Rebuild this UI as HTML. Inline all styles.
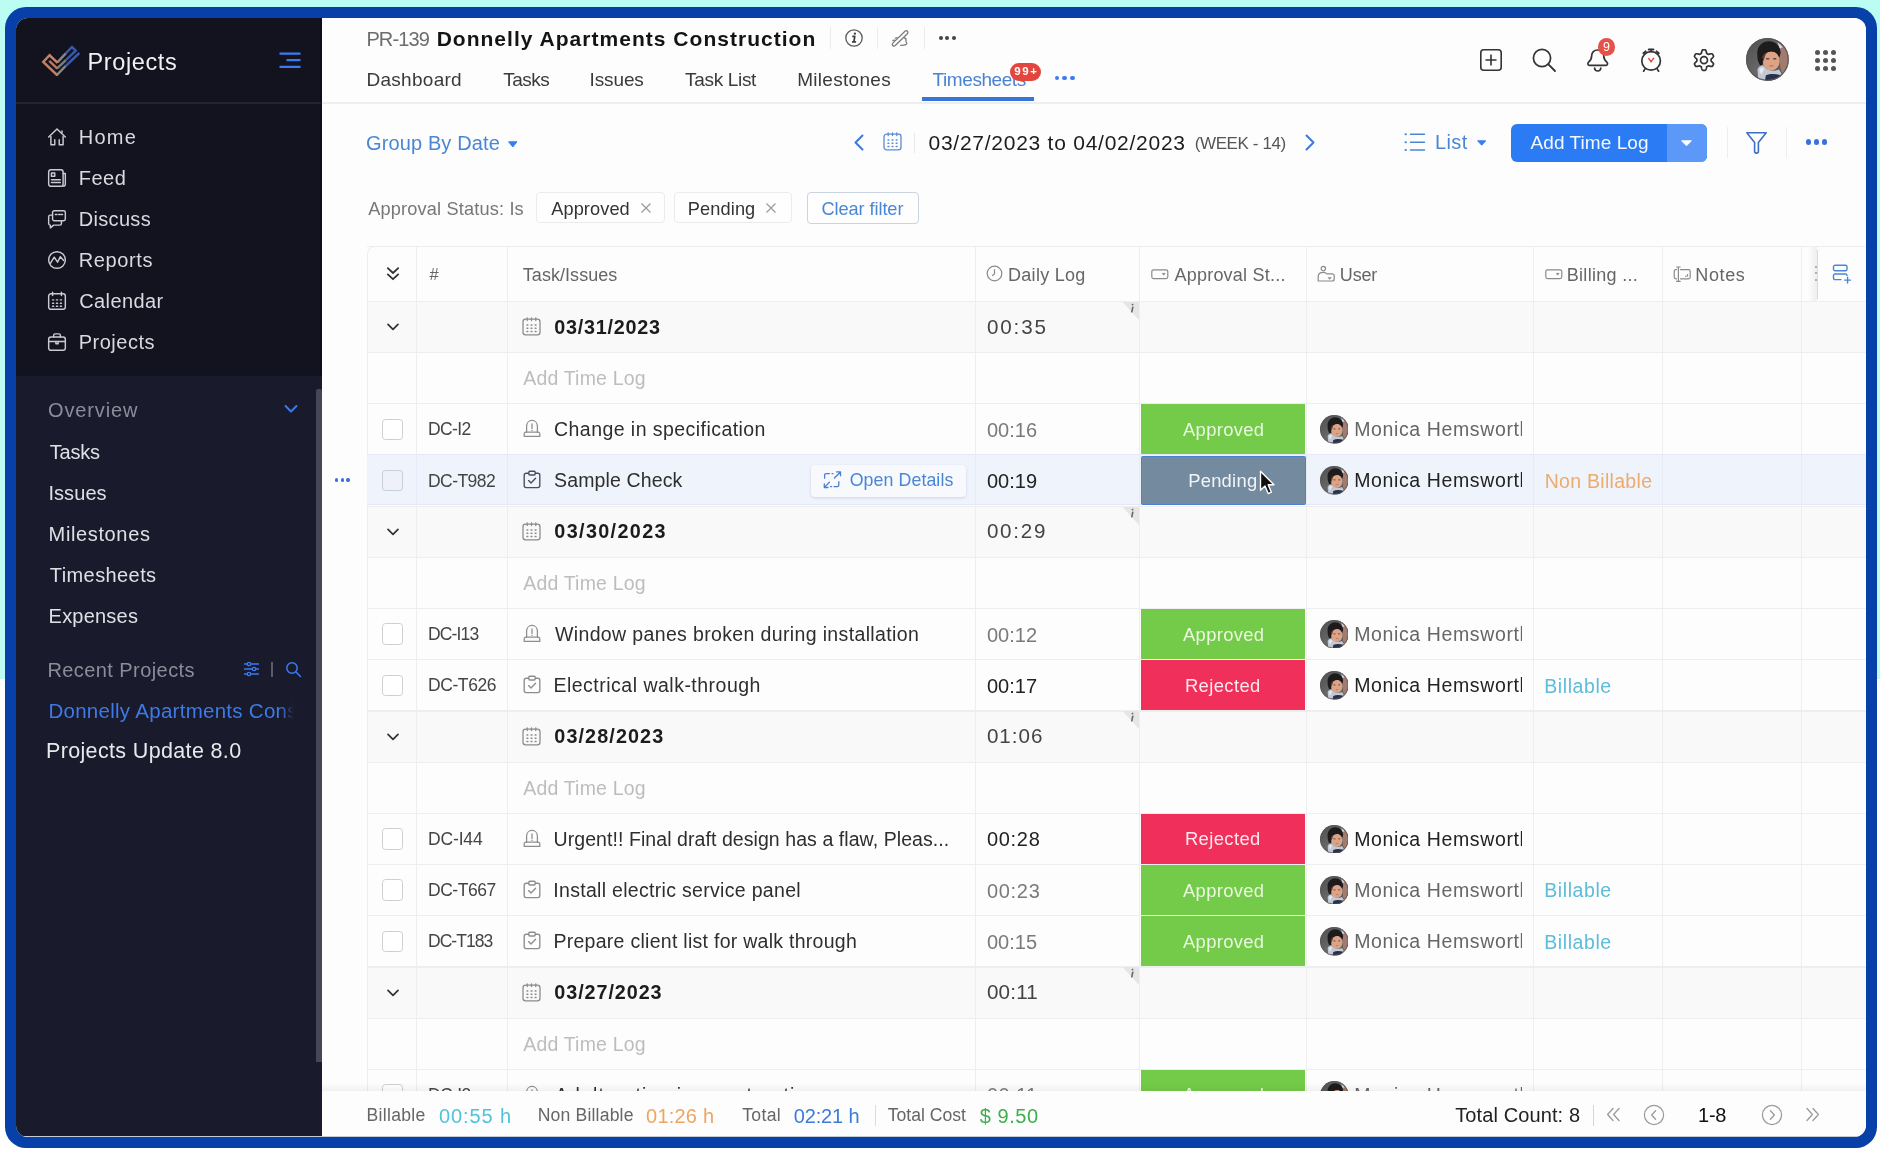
<!DOCTYPE html>
<html><head><meta charset="utf-8"><title>Timesheet</title>
<style>
*{box-sizing:border-box;margin:0;padding:0}
html,body{width:1880px;height:1154px;overflow:hidden;background:#fff;font-family:"Liberation Sans",sans-serif}
.abs{position:absolute}
#bgtop{position:absolute;left:0;top:0;width:1880px;height:679px;background:#bcfdf3}
#frame{position:absolute;left:5px;top:7px;width:1872px;height:1141px;background:#0640a8;border-radius:21px}
#app{position:absolute;left:16px;top:18px;width:1850px;height:1119px;border-radius:12px;overflow:hidden;background:#fdfdfd}
#page{position:absolute;left:-16px;top:-18px;width:1880px;height:1154px;will-change:transform}
.t{position:absolute;white-space:nowrap;line-height:1}
</style></head>
<body>
<div id="bgtop"></div>
<div id="frame"></div>
<div id="app"><div id="page">
<div class="abs" style="left:16px;top:18px;width:306px;height:1119px;background:#12131f"></div>
<div class="abs" style="left:16px;top:375.5px;width:306px;height:762px;background:#191a2b"></div>
<div class="abs" style="left:16px;top:102px;width:306px;height:1.5px;background:#222432"></div>
<div class="abs" style="left:320px;top:18px;width:2px;height:357px;background:rgba(4,5,16,.35)"></div>
<svg class="abs" style="left:36px;top:38px;" width="60" height="46" viewBox="0 0 60 46" fill="none">
<g transform="translate(25.4 23.4) scale(0.935) translate(-25.4 -23.4)" stroke-width="2.65" stroke-linecap="butt" stroke-linejoin="miter" fill="none">
<path d="M29.6 15.4 L36.7 8 L40.7 12 L29.6 22.6" stroke="#3957a3"/>
<path d="M29.3 28.9 L44.6 14.4" stroke="#3b5aa8"/>
<path d="M21.1 24.4 L29.9 15.1" stroke="#878787"/>
<path d="M20.7 31 L29.9 22.3" stroke="#7a7a7a"/>
<path d="M20.2 38.4 L29.6 28.6" stroke="#878787"/>
<path d="M13.6 15.9 L6 23.9 L21 38.2" stroke="#c67e60"/>
<path d="M12.6 16.6 L21.4 25" stroke="#cd8667"/>
<path d="M12.4 22.9 L21 31.2" stroke="#be7558"/>
</g></svg>
<div class="t" style="left:87.52px;top:50.92px;font-size:23.5px;color:#f2f2f4;font-weight:400;letter-spacing:0.61px;">Projects</div>
<svg class="abs" style="left:278px;top:51px;" width="24" height="18" viewBox="0 0 24 18" fill="none"><g stroke="#3b7bf2" stroke-width="2.2"><path d="M1.5 2.7H22.5M8.5 9.2H22.5M1.5 15.8H22.5"/></g></svg>
<div class="t" style="left:78.70px;top:127.20px;font-size:20px;color:#d9dae0;font-weight:400;letter-spacing:1.3px;">Home</div>
<div class="t" style="left:78.70px;top:168.20px;font-size:20px;color:#d9dae0;font-weight:400;letter-spacing:0.533px;">Feed</div>
<div class="t" style="left:78.70px;top:209.20px;font-size:20px;color:#d9dae0;font-weight:400;letter-spacing:0.333px;">Discuss</div>
<div class="t" style="left:78.70px;top:250.20px;font-size:20px;color:#d9dae0;font-weight:400;letter-spacing:0.617px;">Reports</div>
<div class="t" style="left:79.30px;top:291.20px;font-size:20px;color:#d9dae0;font-weight:400;letter-spacing:0.371px;">Calendar</div>
<div class="t" style="left:78.70px;top:332.20px;font-size:20px;color:#d9dae0;font-weight:400;letter-spacing:0.514px;">Projects</div>
<svg class="abs" style="left:46.9px;top:127.4px;" width="20" height="20" viewBox="0 0 18 18" fill="none"><g stroke="#c9cad2" stroke-width="1.3" stroke-linecap="round" stroke-linejoin="round"><path d="M1.5 9 L9 1.8 L16.5 9"/><path d="M3.5 8.5V16H7V11.5"/><path d="M11 11.5V16H14.5V8.5"/><path d="M13.5 3.5V5"/></g></svg>
<svg class="abs" style="left:46.9px;top:168.4px;" width="20" height="20" viewBox="0 0 18 18" fill="none"><g stroke="#c9cad2" stroke-width="1.3" stroke-linecap="round" stroke-linejoin="round"><rect x="1.5" y="1.5" width="13" height="15" rx="2"/><path d="M14.5 5H16.5V14.5A2 2 0 0 1 14.5 16.5"/><rect x="4" y="4.5" width="3" height="3"/><path d="M4 10.5H12M4 13H12"/></g></svg>
<svg class="abs" style="left:46.9px;top:209.4px;" width="20" height="20" viewBox="0 0 18 18" fill="none"><g stroke="#c9cad2" stroke-width="1.3" stroke-linecap="round" stroke-linejoin="round"><rect x="5" y="1.5" width="11.5" height="9" rx="1.5"/><path d="M7.5 5H9M10.5 5H12M13 5H14"/><path d="M5 5.5H3A1.5 1.5 0 0 0 1.5 7V13A1.5 1.5 0 0 0 3 14.5V17L6 14.5H11.5A1.5 1.5 0 0 0 13 13V10.5"/></g></svg>
<svg class="abs" style="left:46.9px;top:250.4px;" width="20" height="20" viewBox="0 0 18 18" fill="none"><g stroke="#c9cad2" stroke-width="1.3" stroke-linecap="round" stroke-linejoin="round"><circle cx="9" cy="9" r="7.5"/><path d="M3 12 L6.5 6.5 L9.5 11 L12 6 L15 9.5" /></g></svg>
<svg class="abs" style="left:46.9px;top:291.4px;" width="20" height="20" viewBox="0 0 18 18" fill="none"><g stroke="#c9cad2" stroke-width="1.3" stroke-linecap="round" stroke-linejoin="round"><rect x="1.5" y="2.5" width="15" height="14" rx="2"/><path d="M5 1V4M13 1V4"/><path d="M5 8H6M8.5 8H9.5M12 8H13M5 11H6M8.5 11H9.5M12 11H13M5 13.8H6M8.5 13.8H9.5M12 13.8H13" /></g></svg>
<svg class="abs" style="left:46.9px;top:332.4px;" width="20" height="20" viewBox="0 0 18 18" fill="none"><g stroke="#c9cad2" stroke-width="1.3" stroke-linecap="round" stroke-linejoin="round"><rect x="1.5" y="4.5" width="15" height="12" rx="2"/><path d="M6 4.5V3A1.3 1.3 0 0 1 7.3 1.7H10.7A1.3 1.3 0 0 1 12 3V4.5"/><path d="M1.5 8.5H16.5"/><path d="M8 8.5V10.5H10V8.5"/></g></svg>
<div class="t" style="left:48.10px;top:399.90px;font-size:20px;color:#8b8d99;font-weight:400;letter-spacing:0.857px;">Overview</div>
<svg class="abs" style="left:283px;top:403px;" width="16" height="12" viewBox="0 0 16 12" fill="none"><path d="M2.5 3 L8 8.5 L13.5 3" stroke="#3b7bf2" stroke-width="2" stroke-linecap="round" stroke-linejoin="round"/></svg>
<div class="t" style="left:49.80px;top:441.80px;font-size:20px;color:#dfe0e5;font-weight:400;letter-spacing:-0.2px;">Tasks</div>
<div class="t" style="left:48.40px;top:482.80px;font-size:20px;color:#dfe0e5;font-weight:400;letter-spacing:0.08px;">Issues</div>
<div class="t" style="left:48.60px;top:523.80px;font-size:20px;color:#dfe0e5;font-weight:400;letter-spacing:0.633px;">Milestones</div>
<div class="t" style="left:49.80px;top:564.80px;font-size:20px;color:#dfe0e5;font-weight:400;letter-spacing:0.411px;">Timesheets</div>
<div class="t" style="left:48.60px;top:605.80px;font-size:20px;color:#dfe0e5;font-weight:400;letter-spacing:0.214px;">Expenses</div>
<div class="t" style="left:47.40px;top:659.80px;font-size:20px;color:#8b8d99;font-weight:400;letter-spacing:0.429px;">Recent Projects</div>
<svg class="abs" style="left:243px;top:661px;" width="17" height="16" viewBox="0 0 17 16" fill="none"><g stroke="#3b7bf2" stroke-width="1.3" stroke-linecap="round"><path d="M1.5 3H15.5M1.5 8H15.5M1.5 13H15.5"/><circle cx="6" cy="3" r="1.7" fill="#1a1b2b"/><circle cx="11" cy="8" r="1.7" fill="#1a1b2b"/><circle cx="6" cy="13" r="1.7" fill="#1a1b2b"/></g></svg>
<div class="abs" style="left:271px;top:662px;width:1.5px;height:15px;background:#5a5c6b"></div>
<svg class="abs" style="left:285px;top:661px;" width="17" height="17" viewBox="0 0 17 17" fill="none"><g stroke="#3b7bf2" stroke-width="1.5" stroke-linecap="round"><circle cx="7" cy="7" r="5.2"/><path d="M11 11L15.5 15.5"/></g></svg>
<div class="abs" style="left:48px;top:695px;width:246px;height:32px;overflow:hidden">
<div class="t" style="left:0.40px;top:6.36px;font-size:20.5px;color:#3e7ae6;font-weight:400;letter-spacing:0.28px;">Donnelly Apartments Construction</div>
</div>
<div class="abs" style="left:280px;top:695px;width:14px;height:32px;background:linear-gradient(90deg,rgba(26,27,43,0),#1a1b2b)"></div>
<div class="t" style="left:45.98px;top:741.28px;font-size:21.5px;color:#e9e9ec;font-weight:400;letter-spacing:0.35px;">Projects Update 8.0</div>
<div class="abs" style="left:315.6px;top:389px;width:6.2px;height:673.2px;background:#454656;border-radius:2px 2px 0 0"></div>
<div class="abs" style="left:322px;top:18px;width:1544px;height:1119px;background:#fdfdfd"></div>
<div class="t" style="left:366.40px;top:29.00px;font-size:20px;color:#6d6d6d;font-weight:400;letter-spacing:-0.86px;">PR-139</div>
<div class="t" style="left:436.63px;top:28.22px;font-size:21px;color:#141414;font-weight:700;letter-spacing:1.023px;">Donnelly Apartments Construction</div>
<div class="abs" style="left:829.6px;top:27px;width:1.2px;height:21.5px;background:#ececec"></div>
<div class="abs" style="left:876.8px;top:27px;width:1.2px;height:21.5px;background:#ececec"></div>
<div class="abs" style="left:924px;top:27px;width:1.2px;height:21.5px;background:#ececec"></div>
<svg class="abs" style="left:843.6px;top:28.2px;" width="20" height="20" viewBox="0 0 20 20" fill="none"><circle cx="10" cy="10" r="8.2" stroke="#5a5a5a" stroke-width="1.3"/><path d="M9 8.4H10.8L9.9 13.6M8.7 13.9H11.4" stroke="#3c3c3c" stroke-width="1.7" stroke-linecap="round" stroke-linejoin="round"/><circle cx="10.9" cy="5.7" r="1.15" fill="#3c3c3c"/></svg>
<svg class="abs" style="left:890px;top:28px;" width="21" height="21" viewBox="0 0 21 21" fill="none"><g stroke="#7c7c7c" stroke-width="1.3" stroke-linecap="round" stroke-linejoin="round"><rect x="-10.2" y="-1.7" width="20.4" height="3.4" rx="1.7" transform="translate(10.1 10.4) rotate(-44.2)"/><path d="M14.4 10 C17.6 10.4 15 13 16.4 14.6 C17.8 16.2 15 17.6 10.6 17.4"/><path d="M3 12.5L4.8 12.1M5.4 10.1L7 9.6"/></g></svg>
<div class="abs" style="left:938.9px;top:36.2px;width:4px;height:4px;background:#444;border-radius:50%"></div>
<div class="abs" style="left:945.3px;top:36.2px;width:4px;height:4px;background:#444;border-radius:50%"></div>
<div class="abs" style="left:951.6999999999999px;top:36.2px;width:4px;height:4px;background:#444;border-radius:50%"></div>
<div class="t" style="left:366.48px;top:70.18px;font-size:19px;color:#3a3a3a;font-weight:400;letter-spacing:0.281px;">Dashboard</div>
<div class="t" style="left:503.32px;top:70.18px;font-size:19px;color:#3a3a3a;font-weight:400;letter-spacing:-0.55px;">Tasks</div>
<div class="t" style="left:589.49px;top:70.18px;font-size:19px;color:#3a3a3a;font-weight:400;letter-spacing:-0.107px;">Issues</div>
<div class="t" style="left:685.12px;top:70.18px;font-size:19px;color:#3a3a3a;font-weight:400;letter-spacing:-0.329px;">Task List</div>
<div class="t" style="left:797.18px;top:70.18px;font-size:19px;color:#3a3a3a;font-weight:400;letter-spacing:0.296px;">Milestones</div>
<div class="t" style="left:932.62px;top:70.18px;font-size:19px;color:#4a82d3;font-weight:400;letter-spacing:-0.436px;">Timesheets</div>
<div class="abs" style="left:1010px;top:63px;width:31px;height:17.5px;background:#e2463f;border-radius:9px"></div>
<div class="t" style="left:1014.15px;top:66.28px;font-size:11.5px;color:#fff;font-weight:700;letter-spacing:1.656px;">99+</div>
<div class="abs" style="left:1054.5px;top:75.8px;width:4.4px;height:4.4px;background:#3b7cf0;border-radius:50%"></div>
<div class="abs" style="left:1062.4px;top:75.8px;width:4.4px;height:4.4px;background:#3b7cf0;border-radius:50%"></div>
<div class="abs" style="left:1070.3px;top:75.8px;width:4.4px;height:4.4px;background:#3b7cf0;border-radius:50%"></div>
<div class="abs" style="left:921.5px;top:97px;width:112px;height:3.5px;background:#3a75d6"></div>
<div class="abs" style="left:322px;top:102px;width:1544px;height:1.5px;background:#eeeeee"></div>
<svg class="abs" style="left:1479px;top:48px;" width="24" height="24" viewBox="0 0 24 24" fill="none"><rect x="1.8" y="1.8" width="20.4" height="20.4" rx="3" stroke="#333" stroke-width="1.6"/><path d="M12 6.5V17.5M6.5 12H17.5" stroke="#333" stroke-width="1.6"/></svg>
<svg class="abs" style="left:1531px;top:47px;" width="26" height="26" viewBox="0 0 26 26" fill="none"><circle cx="11" cy="11" r="8.6" stroke="#333" stroke-width="1.7"/><path d="M17.2 17.2L24 24" stroke="#333" stroke-width="1.8" stroke-linecap="round"/></svg>
<svg class="abs" style="left:1585px;top:47px;" width="26" height="27" viewBox="0 0 26 27" fill="none"><g stroke="#333" stroke-width="1.7" stroke-linecap="round" stroke-linejoin="round"><path d="M4.6 18.3 C2.6 18.3 2.4 16.2 3.6 15.2 C6.2 13 6.6 11.4 6.6 9 C6.6 5.4 9.2 3 12.6 3 C16 3 18.8 5.4 18.8 9 C18.8 11.4 19.2 13 21.8 15.2 C23 16.2 22.8 18.3 20.8 18.3 Z"/><path d="M9.6 21 C9.9 25 15.5 25 15.8 21"/></g></svg>
<div class="abs" style="left:1597.6px;top:38.3px;width:17.4px;height:17.4px;background:#e5524a;border-radius:50%"></div>
<div class="t" style="left:1602.90px;top:41.20px;font-size:12.5px;color:#fff;font-weight:400;letter-spacing:0px;">9</div>
<svg class="abs" style="left:1638px;top:46px;" width="26" height="27" viewBox="0 0 26 27" fill="none"><g stroke="#333" stroke-width="1.7" stroke-linecap="round"><circle cx="13.1" cy="14.9" r="9.3"/><path d="M10.8 3.4H15.4" stroke-width="2"/><path d="M13.1 3.6V5.4"/><path d="M5.4 7.2L7.6 5.4M20.8 7.2L18.6 5.4" stroke-width="2"/><path d="M7.2 22.6L5.6 25.2M19 22.6L20.6 25.2"/><path d="M13.1 15.6L15.6 12.4" stroke="#e2463f" stroke-width="1.5"/><path d="M13.1 15.6L10.8 12.6" stroke="#e2463f" stroke-width="1.5"/></g></svg>
<svg class="abs" style="left:1691px;top:47px;" width="26" height="26" viewBox="0 0 26 26" fill="none"><path d="M20.15 13.10 L20.15 13.35 L20.13 13.60 L20.11 13.85 L20.13 14.10 L20.47 14.42 L20.86 14.77 L21.25 15.16 L21.64 15.58 L22.00 16.03 L22.31 16.49 L22.55 16.96 L22.46 17.31 L22.30 17.64 L22.14 17.96 L21.96 18.27 L21.78 18.58 L21.58 18.89 L21.37 19.18 L21.12 19.44 L20.59 19.47 L20.04 19.43 L19.47 19.35 L18.91 19.22 L18.38 19.07 L17.88 18.91 L17.43 18.77 L17.20 18.88 L17.00 19.03 L16.79 19.16 L16.58 19.29 L16.36 19.41 L16.13 19.53 L15.91 19.63 L15.70 19.77 L15.60 20.23 L15.48 20.74 L15.34 21.28 L15.18 21.83 L14.97 22.36 L14.72 22.86 L14.43 23.30 L14.08 23.39 L13.72 23.42 L13.36 23.44 L13.00 23.45 L12.64 23.44 L12.28 23.42 L11.92 23.39 L11.57 23.30 L11.28 22.86 L11.03 22.36 L10.82 21.83 L10.66 21.28 L10.52 20.74 L10.40 20.23 L10.30 19.77 L10.09 19.63 L9.87 19.53 L9.64 19.41 L9.43 19.29 L9.21 19.16 L9.00 19.03 L8.80 18.88 L8.57 18.77 L8.12 18.91 L7.62 19.07 L7.09 19.22 L6.53 19.35 L5.96 19.43 L5.41 19.47 L4.88 19.44 L4.63 19.18 L4.42 18.89 L4.22 18.58 L4.04 18.27 L3.86 17.96 L3.70 17.64 L3.54 17.31 L3.45 16.96 L3.69 16.49 L4.00 16.03 L4.36 15.58 L4.75 15.16 L5.14 14.77 L5.53 14.42 L5.87 14.10 L5.89 13.85 L5.87 13.60 L5.85 13.35 L5.85 13.10 L5.85 12.85 L5.87 12.60 L5.89 12.35 L5.87 12.10 L5.53 11.78 L5.14 11.43 L4.75 11.04 L4.36 10.62 L4.00 10.17 L3.69 9.71 L3.45 9.24 L3.54 8.89 L3.70 8.56 L3.86 8.24 L4.04 7.92 L4.22 7.62 L4.42 7.31 L4.63 7.02 L4.88 6.76 L5.41 6.73 L5.96 6.77 L6.53 6.85 L7.09 6.98 L7.62 7.13 L8.12 7.29 L8.57 7.43 L8.80 7.32 L9.00 7.17 L9.21 7.04 L9.42 6.91 L9.64 6.79 L9.87 6.67 L10.09 6.57 L10.30 6.43 L10.40 5.97 L10.52 5.46 L10.66 4.92 L10.82 4.37 L11.03 3.84 L11.28 3.34 L11.57 2.90 L11.92 2.81 L12.28 2.78 L12.64 2.76 L13.00 2.75 L13.36 2.76 L13.72 2.78 L14.08 2.81 L14.43 2.90 L14.72 3.34 L14.97 3.84 L15.18 4.37 L15.34 4.92 L15.48 5.46 L15.60 5.97 L15.70 6.43 L15.91 6.57 L16.13 6.67 L16.36 6.79 L16.58 6.91 L16.79 7.04 L17.00 7.17 L17.20 7.32 L17.43 7.43 L17.88 7.29 L18.38 7.13 L18.91 6.98 L19.47 6.85 L20.04 6.77 L20.59 6.73 L21.12 6.76 L21.37 7.02 L21.58 7.31 L21.78 7.62 L21.96 7.92 L22.14 8.24 L22.30 8.56 L22.46 8.89 L22.55 9.24 L22.31 9.71 L22.00 10.17 L21.64 10.62 L21.25 11.04 L20.86 11.43 L20.47 11.78 L20.13 12.10 L20.11 12.35 L20.13 12.60 L20.15 12.85Z" stroke="#333" stroke-width="1.7" stroke-linejoin="round"/><circle cx="13" cy="13.1" r="3.5" stroke="#333" stroke-width="1.7"/></svg>
<svg class="abs" style="left:1746.1999999999998px;top:38.1px;" width="42.8" height="42.8" viewBox="0 0 28 28" fill="none"><defs><clipPath id="avh"><circle cx="14" cy="14" r="14"/></clipPath>
<linearGradient id="avhg" x1="0" y1="0" x2="1" y2="1"><stop offset="0" stop-color="#4e4e4e"/><stop offset=".5" stop-color="#676767"/><stop offset="1" stop-color="#565656"/></linearGradient></defs>
<g clip-path="url(#avh)"><rect width="28" height="28" fill="url(#avhg)"/>
<path d="M21.5 4 L28 4 L28 24 L24.5 25.5 L22.5 20 Z" fill="#a07b6f"/>
<path d="M20.5 2.5 L24 6 L22 7 Z" fill="#d8dadd"/>
<ellipse cx="15" cy="9.4" rx="7.6" ry="7.2" fill="#1e1b1d"/>
<path d="M7.6 10 C7 14 8.4 17.5 10.4 19 L12 12Z" fill="#1e1b1d"/>
<ellipse cx="16.5" cy="15" rx="5.5" ry="6.4" fill="#dca387"/>
<path d="M10.4 12.5 C12 9 17.5 7.6 22.4 10.4 C22.8 8 19 4.6 15 5 C11.5 5.4 9.6 9 10.4 12.5Z" fill="#1e1b1d"/>
<path d="M10.6 12.4 C11.2 10.8 12.2 10 13.4 9.6 C12.6 11.2 12 13 11.6 15.4Z" fill="#6a3a2a"/>
<path d="M13.2 13.6h2M17.8 13.6h2" stroke="#6b4638" stroke-width=".9"/>
<path d="M15.4 18.2h2.6" stroke="#b9745f" stroke-width=".8"/>
<path d="M7.5 20.5 C9 17.6 11 17.2 12 18.6 C13.5 21 17 22.4 21.6 20.6 L24.5 25.5 L20 28 L8 28 Z" fill="#c2c9d4"/>
<path d="M13 24.4 C16 23.2 20 23.4 23.4 24.6 L22 28 L12.4 28Z" fill="#2a304a"/>
<path d="M2 23.5 L9.5 27 L8 28 L1 26Z" fill="#b5b5b5"/>
<path d="M9 20.2 C10 19 11 19 12 20.4 C11 21.6 10.4 22.6 10.6 24 C9.2 23.2 8.6 21.8 9 20.2Z" fill="#e6e9ee"/>
</g><circle cx="14" cy="14" r="13.6" stroke="#595757" stroke-width=".7" fill="none"/></svg>
<div class="abs" style="left:1815.3px;top:50.1px;width:5.2px;height:5.2px;background:#555;border-radius:50%"></div>
<div class="abs" style="left:1823.05px;top:50.1px;width:5.2px;height:5.2px;background:#555;border-radius:50%"></div>
<div class="abs" style="left:1830.8px;top:50.1px;width:5.2px;height:5.2px;background:#555;border-radius:50%"></div>
<div class="abs" style="left:1815.3px;top:57.85px;width:5.2px;height:5.2px;background:#555;border-radius:50%"></div>
<div class="abs" style="left:1823.05px;top:57.85px;width:5.2px;height:5.2px;background:#555;border-radius:50%"></div>
<div class="abs" style="left:1830.8px;top:57.85px;width:5.2px;height:5.2px;background:#555;border-radius:50%"></div>
<div class="abs" style="left:1815.3px;top:65.6px;width:5.2px;height:5.2px;background:#555;border-radius:50%"></div>
<div class="abs" style="left:1823.05px;top:65.6px;width:5.2px;height:5.2px;background:#555;border-radius:50%"></div>
<div class="abs" style="left:1830.8px;top:65.6px;width:5.2px;height:5.2px;background:#555;border-radius:50%"></div>
<div class="t" style="left:366.00px;top:133.20px;font-size:20px;color:#4a86d6;font-weight:400;letter-spacing:0.125px;">Group By Date</div>
<svg class="abs" style="left:508px;top:140.6px;" width="9.6" height="6.4" viewBox="0 0 9.6 6.4" fill="none"><path d="M0.6 0.8 H9.0 L4.8 6.0 Z" fill="#3b7cf0" stroke="#3b7cf0" stroke-width="1" stroke-linejoin="round"/></svg>
<svg class="abs" style="left:852px;top:133px;" width="14" height="19" viewBox="0 0 14 19" fill="none"><path d="M10.5 2.5 L3.5 9.5 L10.5 16.5" stroke="#3f78d8" stroke-width="2" stroke-linecap="round" stroke-linejoin="round"/></svg>
<svg class="abs" style="left:882.6px;top:132.3px;" width="19" height="19" viewBox="0 0 19 19" fill="none"><g stroke="#5d8ad4" stroke-width="1.3" stroke-linecap="round"><rect x="1" y="2.2" width="17" height="15.6" rx="2.6"/><path d="M5.2 0.8V3.6M13.8 0.8V3.6M9.5 0.8V3.6"/><path d="M5 8h.8M9.1 8h.8M13.2 8h.8M5 11.2h.8M9.1 11.2h.8M13.2 11.2h.8M5 14.4h.8M9.1 14.4h.8M13.2 14.4h.8" stroke-width="1.5"/></g></svg>
<div class="abs" style="left:914px;top:133px;width:1px;height:20px;background:#e8e8e8"></div>
<div class="t" style="left:928.47px;top:131.82px;font-size:21px;color:#1c1c1c;font-weight:400;letter-spacing:0.747px;">03/27/2023 to 04/02/2023</div>
<div class="t" style="left:1194.78px;top:135.24px;font-size:17px;color:#555;font-weight:400;letter-spacing:-0.402px;">(WEEK - 14)</div>
<svg class="abs" style="left:1303px;top:133px;" width="14" height="19" viewBox="0 0 14 19" fill="none"><path d="M3.5 2.5 L10.5 9.5 L3.5 16.5" stroke="#3f78d8" stroke-width="2" stroke-linecap="round" stroke-linejoin="round"/></svg>
<svg class="abs" style="left:1404px;top:132px;" width="22" height="20" viewBox="0 0 22 20" fill="none"><g stroke="#4a86d6" stroke-width="1.5" stroke-linecap="round"><path d="M6.5 2.3H20.5M6.5 10.2H20.5M6.5 18H20.5"/><path d="M1.5 2.3h.4M1.5 10.2h.4M1.5 18h.4" stroke-width="2"/></g></svg>
<div class="t" style="left:1434.90px;top:132.20px;font-size:20px;color:#4a86d6;font-weight:400;letter-spacing:0.433px;">List</div>
<svg class="abs" style="left:1476.6px;top:140.2px;" width="9.4" height="5.6" viewBox="0 0 9.4 5.6" fill="none"><path d="M0.6 0.8 H8.8 L4.7 5.199999999999999 Z" fill="#3b7cf0" stroke="#3b7cf0" stroke-width="1" stroke-linejoin="round"/></svg>
<div class="abs" style="left:1511px;top:123.5px;width:196px;height:38px;background:#2b7bf5;border-radius:6px"></div>
<div class="abs" style="left:1667px;top:123.5px;width:40px;height:38px;background:#5c98f7;border-radius:0 6px 6px 0"></div>
<div class="t" style="left:1530.60px;top:133.08px;font-size:19px;color:#f4f8ff;font-weight:400;letter-spacing:0.065px;">Add Time Log</div>
<svg class="abs" style="left:1681.4px;top:140px;" width="11" height="6.2" viewBox="0 0 11 6.2" fill="none"><path d="M0.6 0.8 H10.4 L5.5 5.8 Z" fill="#fff" stroke="#fff" stroke-width="1" stroke-linejoin="round"/></svg>
<div class="abs" style="left:1727px;top:127px;width:1px;height:31px;background:#ededed"></div>
<svg class="abs" style="left:1745px;top:131px;" width="23" height="23" viewBox="0 0 23 23" fill="none"><path d="M1.8 1.8 H21.2 L13.4 11.5 V20.2 A1.9 1.9 0 0 1 9.6 20.2 V11.5 Z" stroke="#3f6fc4" stroke-width="1.6" stroke-linejoin="round"/></svg>
<div class="abs" style="left:1786px;top:127px;width:1px;height:31px;background:#ededed"></div>
<div class="abs" style="left:1806.0px;top:139.4px;width:5.2px;height:5.2px;background:#3b72d6;border-radius:50%"></div>
<div class="abs" style="left:1813.9px;top:139.4px;width:5.2px;height:5.2px;background:#3b72d6;border-radius:50%"></div>
<div class="abs" style="left:1821.8px;top:139.4px;width:5.2px;height:5.2px;background:#3b72d6;border-radius:50%"></div>
<div class="t" style="left:368.20px;top:199.86px;font-size:18.2px;color:#777;font-weight:400;letter-spacing:0.158px;">Approval Status: Is</div>
<div class="abs" style="left:535.7px;top:192.3px;width:129.5px;height:31.2px;border:1px solid #ebebeb;border-radius:4px;background:#fefefe"></div>
<div class="t" style="left:551.20px;top:199.66px;font-size:18.2px;color:#333;font-weight:400;letter-spacing:0.099px;">Approved</div>
<svg class="abs" style="left:639.5px;top:202.2px;" width="12" height="12" viewBox="0 0 12 12" fill="none"><path d="M1.5 1.5L10.5 10.5M10.5 1.5L1.5 10.5" stroke="#9a9a9a" stroke-width="1.2"/></svg>
<div class="abs" style="left:673.7px;top:192.3px;width:118.3px;height:31.2px;border:1px solid #ebebeb;border-radius:4px;background:#fefefe"></div>
<div class="t" style="left:687.74px;top:199.66px;font-size:18.2px;color:#333;font-weight:400;letter-spacing:0.126px;">Pending</div>
<svg class="abs" style="left:765.3px;top:202.2px;" width="12" height="12" viewBox="0 0 12 12" fill="none"><path d="M1.5 1.5L10.5 10.5M10.5 1.5L1.5 10.5" stroke="#9a9a9a" stroke-width="1.2"/></svg>
<div class="abs" style="left:806.6px;top:192.3px;width:112.8px;height:31.4px;border:1.5px solid #c9d3e2;border-radius:4px;background:#fefefe"></div>
<div class="t" style="left:821.59px;top:199.66px;font-size:18.2px;color:#4a86d6;font-weight:400;letter-spacing:-0.092px;">Clear filter</div>
<div class="abs" style="left:367px;top:246px;width:1499px;height:55px;background:#fdfdfd;border-top-left-radius:8px"></div>
<div class="abs" style="left:367px;top:301.0px;width:1499px;height:51.2px;background:#f9f9f9"></div>
<div class="abs" style="left:367px;top:505.8px;width:1499px;height:51.2px;background:#f9f9f9"></div>
<div class="abs" style="left:367px;top:710.6px;width:1499px;height:51.2px;background:#f9f9f9"></div>
<div class="abs" style="left:367px;top:966.6px;width:1499px;height:51.2px;background:#f9f9f9"></div>
<div class="abs" style="left:367px;top:246px;width:1499px;height:1px;background:#eeeeee"></div>
<div class="abs" style="left:367px;top:246px;width:12px;height:12px;border-top-left-radius:8px;border-left:1px solid #eeeeee;border-top:1px solid #eeeeee"></div>
<div class="abs" style="left:367px;top:254px;width:1px;height:890px;background:#eeeeee"></div>
<div class="abs" style="left:367px;top:300.8px;width:1499px;height:1.2px;background:#eeeeee"></div>
<div class="abs" style="left:367px;top:352.0px;width:1499px;height:1.2px;background:#eeeeee"></div>
<div class="abs" style="left:367px;top:403.2px;width:1499px;height:1.2px;background:#eeeeee"></div>
<div class="abs" style="left:367px;top:454.40000000000003px;width:1499px;height:1.2px;background:#eeeeee"></div>
<div class="abs" style="left:367px;top:505.6px;width:1499px;height:1.2px;background:#eeeeee"></div>
<div class="abs" style="left:367px;top:556.8px;width:1499px;height:1.2px;background:#eeeeee"></div>
<div class="abs" style="left:367px;top:608.0px;width:1499px;height:1.2px;background:#eeeeee"></div>
<div class="abs" style="left:367px;top:659.2px;width:1499px;height:1.2px;background:#eeeeee"></div>
<div class="abs" style="left:367px;top:710.4px;width:1499px;height:1.2px;background:#eeeeee"></div>
<div class="abs" style="left:367px;top:761.5999999999999px;width:1499px;height:1.2px;background:#eeeeee"></div>
<div class="abs" style="left:367px;top:812.8px;width:1499px;height:1.2px;background:#eeeeee"></div>
<div class="abs" style="left:367px;top:864.0px;width:1499px;height:1.2px;background:#eeeeee"></div>
<div class="abs" style="left:367px;top:915.2px;width:1499px;height:1.2px;background:#eeeeee"></div>
<div class="abs" style="left:367px;top:966.4px;width:1499px;height:1.2px;background:#eeeeee"></div>
<div class="abs" style="left:367px;top:1017.6px;width:1499px;height:1.2px;background:#eeeeee"></div>
<div class="abs" style="left:367px;top:1068.8px;width:1499px;height:1.2px;background:#eeeeee"></div>
<div class="abs" style="left:367px;top:1120.0px;width:1499px;height:1.2px;background:#eeeeee"></div>
<div class="abs" style="left:416.0px;top:246px;width:1.2px;height:890px;background:#eeeeee"></div>
<div class="abs" style="left:506.5px;top:246px;width:1.2px;height:890px;background:#eeeeee"></div>
<div class="abs" style="left:974.5px;top:246px;width:1.2px;height:890px;background:#eeeeee"></div>
<div class="abs" style="left:1139.0px;top:246px;width:1.2px;height:890px;background:#eeeeee"></div>
<div class="abs" style="left:1306.2px;top:246px;width:1.2px;height:890px;background:#eeeeee"></div>
<div class="abs" style="left:1532.7px;top:246px;width:1.2px;height:890px;background:#eeeeee"></div>
<div class="abs" style="left:1661.5px;top:246px;width:1.2px;height:890px;background:#eeeeee"></div>
<div class="abs" style="left:1800.7px;top:246px;width:1.2px;height:890px;background:#eeeeee"></div>
<div class="abs" style="left:367px;top:453.9px;width:1499px;height:51.2px;background:#eff3fc;border-top:1px solid #e4e9f5;border-bottom:1px solid #e2e8f5"></div>
<div class="abs" style="left:416.0px;top:455px;width:1.2px;height:49px;background:#e6ebf6"></div>
<div class="abs" style="left:506.5px;top:455px;width:1.2px;height:49px;background:#e6ebf6"></div>
<div class="abs" style="left:974.5px;top:455px;width:1.2px;height:49px;background:#e6ebf6"></div>
<div class="abs" style="left:1139.0px;top:455px;width:1.2px;height:49px;background:#e6ebf6"></div>
<div class="abs" style="left:1306.2px;top:455px;width:1.2px;height:49px;background:#e6ebf6"></div>
<div class="abs" style="left:1532.7px;top:455px;width:1.2px;height:49px;background:#e6ebf6"></div>
<div class="abs" style="left:1661.5px;top:455px;width:1.2px;height:49px;background:#e6ebf6"></div>
<div class="abs" style="left:1800.7px;top:455px;width:1.2px;height:49px;background:#e6ebf6"></div>
<svg class="abs" style="left:385px;top:266px;" width="16" height="16" viewBox="0 0 16 16" fill="none"><g stroke="#333" stroke-width="1.8" stroke-linecap="round" stroke-linejoin="round"><path d="M2.8 2.2L8 7L13.2 2.2M2.8 8.4L8 13.2L13.2 8.4"/></g></svg>
<div class="t" style="left:429.50px;top:266.28px;font-size:16.5px;color:#666;font-weight:400;letter-spacing:0px;">#</div>
<div class="t" style="left:522.84px;top:265.56px;font-size:18px;color:#666;font-weight:400;letter-spacing:0.044px;">Task/Issues</div>
<svg class="abs" style="left:986px;top:265.3px;" width="17" height="17" viewBox="0 0 17 17" fill="none"><g stroke="#8a8a8a" stroke-width="1.2" stroke-linecap="round"><circle cx="8.5" cy="8.5" r="7.3"/><path d="M8.5 4.5V9L6.5 10.5"/></g></svg>
<div class="t" style="left:1008.06px;top:265.56px;font-size:18px;color:#666;font-weight:400;letter-spacing:0.283px;">Daily Log</div>
<svg class="abs" style="left:1150.8px;top:268.6px;" width="18" height="11" viewBox="0 0 18 11" fill="none"><g stroke="#8a8a8a" stroke-width="1.2" stroke-linejoin="round"><rect x="0.8" y="0.8" width="16" height="8.8" rx="1.8"/><path d="M11.2 4.3H14.2L12.7 6.2Z" fill="#8a8a8a" stroke-width=".6"/></g></svg>
<div class="t" style="left:1174.50px;top:265.56px;font-size:18px;color:#666;font-weight:400;letter-spacing:0.218px;">Approval St...</div>
<svg class="abs" style="left:1317px;top:265px;" width="19" height="18" viewBox="0 0 19 18" fill="none"><g stroke="#8a8a8a" stroke-width="1.2" stroke-linecap="round" stroke-linejoin="round"><circle cx="6.3" cy="3.6" r="2.2"/><path d="M1.2 16V11.5C1.2 8.5 3.5 7.3 6.3 7.3C8 7.3 9 7.8 9.8 8.8H15.2A2 2 0 0 1 17.2 10.8V14A2 2 0 0 1 15.2 16Z"/><path d="M11.4 12.6H14.2L12.8 14.2Z" fill="#8a8a8a" stroke-width=".6"/></g></svg>
<div class="t" style="left:1339.85px;top:265.56px;font-size:18px;color:#666;font-weight:400;letter-spacing:-0.217px;">User</div>
<svg class="abs" style="left:1544.8px;top:268.6px;" width="18" height="11" viewBox="0 0 18 11" fill="none"><g stroke="#8a8a8a" stroke-width="1.2" stroke-linejoin="round"><rect x="0.8" y="0.8" width="16" height="8.8" rx="1.8"/><path d="M11.2 4.3H14.2L12.7 6.2Z" fill="#8a8a8a" stroke-width=".6"/></g></svg>
<div class="t" style="left:1566.76px;top:265.56px;font-size:18px;color:#666;font-weight:400;letter-spacing:0.302px;">Billing ...</div>
<svg class="abs" style="left:1672.5px;top:265.5px;" width="19" height="17" viewBox="0 0 19 17" fill="none"><g stroke="#8a8a8a" stroke-width="1.2" stroke-linecap="round" stroke-linejoin="round"><path d="M7.5 3.6H15.4A1.8 1.8 0 0 1 17.2 5.4V11A1.8 1.8 0 0 1 15.4 12.8H7.5M3.5 12.8H3A1.8 1.8 0 0 1 1.2 11V5.4A1.8 1.8 0 0 1 3 3.6H3.5"/><path d="M3.6 1H7.2M5.4 1V15.4M3.6 15.4H7.2"/><path d="M12.5 10.2H14.6V8.4" stroke-width="1"/></g></svg>
<div class="t" style="left:1695.26px;top:265.56px;font-size:18px;color:#666;font-weight:400;letter-spacing:0.648px;">Notes</div>
<div class="abs" style="left:1808px;top:247px;width:9px;height:54px;background:linear-gradient(90deg,rgba(0,0,0,0),rgba(0,0,0,.06))"></div>
<div class="abs" style="left:1817px;top:247px;width:49px;height:54px;background:#fdfdfd"></div>
<div class="abs" style="left:1816.5px;top:250px;width:1px;height:49px;background:#dcdcdc"></div>
<div class="abs" style="left:1814.6px;top:265.5px;width:2px;height:2.4px;background:#9a9a9a;border-radius:1px"></div>
<div class="abs" style="left:1814.6px;top:272.1px;width:2px;height:2.4px;background:#9a9a9a;border-radius:1px"></div>
<div class="abs" style="left:1814.6px;top:278.7px;width:2px;height:2.4px;background:#9a9a9a;border-radius:1px"></div>
<svg class="abs" style="left:1831.5px;top:263.5px;" width="21" height="20" viewBox="0 0 21 20" fill="none"><g stroke="#4a86d6" stroke-width="1.4" stroke-linecap="round" stroke-linejoin="round"><rect x="1.5" y="1.2" width="13.5" height="5.6" rx="1.6"/><path d="M9 15.6H3.1A1.6 1.6 0 0 1 1.5 14V11.6A1.6 1.6 0 0 1 3.1 10H13.4A1.6 1.6 0 0 1 15 11.6"/><path d="M15.6 13.2V19M12.7 16.1H18.5"/></g></svg>
<svg class="abs" style="left:385.5px;top:321.90000000000003px;" width="14" height="10" viewBox="0 0 14 10" fill="none"><path d="M2 2.4L7 7.4L12 2.4" stroke="#333" stroke-width="1.7" stroke-linecap="round" stroke-linejoin="round"/></svg>
<svg class="abs" style="left:522.3px;top:317.1px;" width="19" height="19" viewBox="0 0 19 19" fill="none"><g stroke="#8a8a8a" stroke-width="1.25" stroke-linecap="round"><rect x="1" y="2.2" width="17" height="15.6" rx="2.6"/><path d="M5.2 0.8V3.6M13.8 0.8V3.6M9.5 0.8V3.6"/><path d="M5 8h.8M9.1 8h.8M13.2 8h.8M5 11.2h.8M9.1 11.2h.8M13.2 11.2h.8M5 14.4h.8M9.1 14.4h.8M13.2 14.4h.8" stroke-width="1.5"/></g></svg>
<div class="t" style="left:554.31px;top:317.60px;font-size:19.8px;color:#1c1c1c;font-weight:700;letter-spacing:0.732px;">03/31/2023</div>
<div class="t" style="left:986.88px;top:316.51px;font-size:20.6px;color:#444;font-weight:400;letter-spacing:1.886px;">00:35</div>
<svg class="abs" style="left:1122px;top:301.8px;" width="17" height="18" viewBox="0 0 17 18" fill="none"><path d="M0.5 0H17V18Z" fill="#e6e6e6"/><path d="M10.4 2.6h.3M10.8 5.2L9.8 9.8" stroke="#666" stroke-width="1.6" stroke-linecap="round"/></svg>
<div class="t" style="left:523.20px;top:368.94px;font-size:19.5px;color:#bdbdbd;font-weight:400;letter-spacing:0.196px;">Add Time Log</div>
<div class="abs" style="left:382px;top:418.6px;width:21.4px;height:21.4px;border:1.5px solid #cfcfcf;border-radius:3.5px;background:#fff"></div>
<div class="t" style="left:428.00px;top:421.30px;font-size:17.5px;color:#444;font-weight:400;letter-spacing:-0.622px;">DC-I2</div>
<svg class="abs" style="left:522.8px;top:419.2px;" width="18" height="19" viewBox="0 0 18 19" fill="none"><g stroke="#8d8d8d" stroke-width="1.25" stroke-linecap="round" stroke-linejoin="round"><path d="M3.6 13.2V7.4C3.6 3.9 5.9 1.4 9 1.4C12.1 1.4 14.4 3.9 14.4 7.4V13.2"/><path d="M1.2 17.4V14.8A1.6 1.6 0 0 1 2.8 13.2H15.2A1.6 1.6 0 0 1 16.8 14.8V17.4Z"/><path d="M9 4.8V9.4M9 11.2V11.4"/></g></svg>
<div class="t" style="left:554.02px;top:420.14px;font-size:19.5px;color:#2e2e2e;font-weight:400;letter-spacing:0.446px;">Change in specification</div>
<div class="t" style="left:986.90px;top:419.80px;font-size:20px;color:#7a7a7a;font-weight:400;letter-spacing:0.025px;">00:16</div>
<div class="abs" style="left:1141.3px;top:404.0px;width:163.5px;height:50.2px;background:#73cb49"></div>
<div class="t" style="left:1183.00px;top:420.87px;font-size:18.4px;color:#e9f8df;font-weight:400;letter-spacing:0.336px;">Approved</div>
<svg class="abs" style="left:1319.7px;top:415.0px;" width="28.6" height="28.6" viewBox="0 0 28 28" fill="none"><defs><clipPath id="av2"><circle cx="14" cy="14" r="14"/></clipPath>
<linearGradient id="av2g" x1="0" y1="0" x2="1" y2="1"><stop offset="0" stop-color="#4e4e4e"/><stop offset=".5" stop-color="#676767"/><stop offset="1" stop-color="#565656"/></linearGradient></defs>
<g clip-path="url(#av2)"><rect width="28" height="28" fill="url(#av2g)"/>
<path d="M21.5 4 L28 4 L28 24 L24.5 25.5 L22.5 20 Z" fill="#a07b6f"/>
<path d="M20.5 2.5 L24 6 L22 7 Z" fill="#d8dadd"/>
<ellipse cx="15" cy="9.4" rx="7.6" ry="7.2" fill="#1e1b1d"/>
<path d="M7.6 10 C7 14 8.4 17.5 10.4 19 L12 12Z" fill="#1e1b1d"/>
<ellipse cx="16.5" cy="15" rx="5.5" ry="6.4" fill="#dca387"/>
<path d="M10.4 12.5 C12 9 17.5 7.6 22.4 10.4 C22.8 8 19 4.6 15 5 C11.5 5.4 9.6 9 10.4 12.5Z" fill="#1e1b1d"/>
<path d="M10.6 12.4 C11.2 10.8 12.2 10 13.4 9.6 C12.6 11.2 12 13 11.6 15.4Z" fill="#6a3a2a"/>
<path d="M13.2 13.6h2M17.8 13.6h2" stroke="#6b4638" stroke-width=".9"/>
<path d="M15.4 18.2h2.6" stroke="#b9745f" stroke-width=".8"/>
<path d="M7.5 20.5 C9 17.6 11 17.2 12 18.6 C13.5 21 17 22.4 21.6 20.6 L24.5 25.5 L20 28 L8 28 Z" fill="#c2c9d4"/>
<path d="M13 24.4 C16 23.2 20 23.4 23.4 24.6 L22 28 L12.4 28Z" fill="#2a304a"/>
<path d="M2 23.5 L9.5 27 L8 28 L1 26Z" fill="#b5b5b5"/>
<path d="M9 20.2 C10 19 11 19 12 20.4 C11 21.6 10.4 22.6 10.6 24 C9.2 23.2 8.6 21.8 9 20.2Z" fill="#e6e9ee"/>
</g><circle cx="14" cy="14" r="13.6" stroke="#595757" stroke-width=".7" fill="none"/></svg>
<div class="abs" style="left:1355px;top:411.4px;width:166.8px;height:36px;overflow:hidden">
<div class="t" style="left:-0.86px;top:8.74px;font-size:19.5px;color:#666;font-weight:400;letter-spacing:0.627px;">Monica Hemsworth</div>
</div>
<div class="abs" style="left:382px;top:469.80000000000007px;width:21.4px;height:21.4px;border:1.5px solid #c9cedb;border-radius:3.5px;background:#eef1f9"></div>
<div class="t" style="left:428.00px;top:472.50px;font-size:17.5px;color:#444;font-weight:400;letter-spacing:-0.546px;">DC-T982</div>
<svg class="abs" style="left:522.8px;top:470.40000000000003px;" width="18" height="19" viewBox="0 0 18 19" fill="none"><g stroke="#474c5e" stroke-width="1.35" stroke-linecap="round" stroke-linejoin="round"><path d="M5.6 3.2H3.2A2 2 0 0 0 1.2 5.2V15.6A2 2 0 0 0 3.2 17.6H14.8A2 2 0 0 0 16.8 15.6V5.2A2 2 0 0 0 14.8 3.2H12.4"/><rect x="5.8" y="1.2" width="6.4" height="3.8" rx="1"/><path d="M5.6 10.6L8 13L12.6 8.2"/></g></svg>
<div class="t" style="left:554.12px;top:471.34px;font-size:19.5px;color:#2e2e2e;font-weight:400;letter-spacing:0.13px;">Sample Check</div>
<div class="t" style="left:986.90px;top:471.00px;font-size:20px;color:#222;font-weight:400;letter-spacing:0.05px;">00:19</div>
<div class="abs" style="left:1141.3px;top:456.0px;width:164.6px;height:48.800000000000004px;background:#748a9e;border:1.5px solid #4c80d4;border-radius:1.5px"></div>
<div class="t" style="left:1188.13px;top:472.07px;font-size:18.4px;color:#f1f5fa;font-weight:400;letter-spacing:0.258px;">Pending</div>
<svg class="abs" style="left:1319.7px;top:466.20000000000005px;" width="28.6" height="28.6" viewBox="0 0 28 28" fill="none"><defs><clipPath id="av3"><circle cx="14" cy="14" r="14"/></clipPath>
<linearGradient id="av3g" x1="0" y1="0" x2="1" y2="1"><stop offset="0" stop-color="#4e4e4e"/><stop offset=".5" stop-color="#676767"/><stop offset="1" stop-color="#565656"/></linearGradient></defs>
<g clip-path="url(#av3)"><rect width="28" height="28" fill="url(#av3g)"/>
<path d="M21.5 4 L28 4 L28 24 L24.5 25.5 L22.5 20 Z" fill="#a07b6f"/>
<path d="M20.5 2.5 L24 6 L22 7 Z" fill="#d8dadd"/>
<ellipse cx="15" cy="9.4" rx="7.6" ry="7.2" fill="#1e1b1d"/>
<path d="M7.6 10 C7 14 8.4 17.5 10.4 19 L12 12Z" fill="#1e1b1d"/>
<ellipse cx="16.5" cy="15" rx="5.5" ry="6.4" fill="#dca387"/>
<path d="M10.4 12.5 C12 9 17.5 7.6 22.4 10.4 C22.8 8 19 4.6 15 5 C11.5 5.4 9.6 9 10.4 12.5Z" fill="#1e1b1d"/>
<path d="M10.6 12.4 C11.2 10.8 12.2 10 13.4 9.6 C12.6 11.2 12 13 11.6 15.4Z" fill="#6a3a2a"/>
<path d="M13.2 13.6h2M17.8 13.6h2" stroke="#6b4638" stroke-width=".9"/>
<path d="M15.4 18.2h2.6" stroke="#b9745f" stroke-width=".8"/>
<path d="M7.5 20.5 C9 17.6 11 17.2 12 18.6 C13.5 21 17 22.4 21.6 20.6 L24.5 25.5 L20 28 L8 28 Z" fill="#c2c9d4"/>
<path d="M13 24.4 C16 23.2 20 23.4 23.4 24.6 L22 28 L12.4 28Z" fill="#2a304a"/>
<path d="M2 23.5 L9.5 27 L8 28 L1 26Z" fill="#b5b5b5"/>
<path d="M9 20.2 C10 19 11 19 12 20.4 C11 21.6 10.4 22.6 10.6 24 C9.2 23.2 8.6 21.8 9 20.2Z" fill="#e6e9ee"/>
</g><circle cx="14" cy="14" r="13.6" stroke="#595757" stroke-width=".7" fill="none"/></svg>
<div class="abs" style="left:1355px;top:462.6px;width:166.8px;height:36px;overflow:hidden">
<div class="t" style="left:-0.86px;top:8.74px;font-size:19.5px;color:#222;font-weight:400;letter-spacing:0.627px;">Monica Hemsworth</div>
</div>
<div class="t" style="left:1544.64px;top:471.74px;font-size:19.5px;color:#ecab6d;font-weight:400;letter-spacing:0.301px;">Non Billable</div>
<svg class="abs" style="left:385.5px;top:526.6999999999999px;" width="14" height="10" viewBox="0 0 14 10" fill="none"><path d="M2 2.4L7 7.4L12 2.4" stroke="#333" stroke-width="1.7" stroke-linecap="round" stroke-linejoin="round"/></svg>
<svg class="abs" style="left:522.3px;top:521.9px;" width="19" height="19" viewBox="0 0 19 19" fill="none"><g stroke="#8a8a8a" stroke-width="1.25" stroke-linecap="round"><rect x="1" y="2.2" width="17" height="15.6" rx="2.6"/><path d="M5.2 0.8V3.6M13.8 0.8V3.6M9.5 0.8V3.6"/><path d="M5 8h.8M9.1 8h.8M13.2 8h.8M5 11.2h.8M9.1 11.2h.8M13.2 11.2h.8M5 14.4h.8M9.1 14.4h.8M13.2 14.4h.8" stroke-width="1.5"/></g></svg>
<div class="t" style="left:554.31px;top:522.40px;font-size:19.8px;color:#1c1c1c;font-weight:700;letter-spacing:1.365px;">03/30/2023</div>
<div class="t" style="left:986.88px;top:521.31px;font-size:20.6px;color:#444;font-weight:400;letter-spacing:1.737px;">00:29</div>
<svg class="abs" style="left:1122px;top:506.6px;" width="17" height="18" viewBox="0 0 17 18" fill="none"><path d="M0.5 0H17V18Z" fill="#e6e6e6"/><path d="M10.4 2.6h.3M10.8 5.2L9.8 9.8" stroke="#666" stroke-width="1.6" stroke-linecap="round"/></svg>
<div class="t" style="left:523.20px;top:573.74px;font-size:19.5px;color:#bdbdbd;font-weight:400;letter-spacing:0.196px;">Add Time Log</div>
<div class="abs" style="left:382px;top:623.4px;width:21.4px;height:21.4px;border:1.5px solid #cfcfcf;border-radius:3.5px;background:#fff"></div>
<div class="t" style="left:428.00px;top:626.10px;font-size:17.5px;color:#444;font-weight:400;letter-spacing:-0.857px;">DC-I13</div>
<svg class="abs" style="left:522.8px;top:624.0px;" width="18" height="19" viewBox="0 0 18 19" fill="none"><g stroke="#8d8d8d" stroke-width="1.25" stroke-linecap="round" stroke-linejoin="round"><path d="M3.6 13.2V7.4C3.6 3.9 5.9 1.4 9 1.4C12.1 1.4 14.4 3.9 14.4 7.4V13.2"/><path d="M1.2 17.4V14.8A1.6 1.6 0 0 1 2.8 13.2H15.2A1.6 1.6 0 0 1 16.8 14.8V17.4Z"/><path d="M9 4.8V9.4M9 11.2V11.4"/></g></svg>
<div class="t" style="left:555.00px;top:624.94px;font-size:19.5px;color:#2e2e2e;font-weight:400;letter-spacing:0.359px;">Window panes broken during installation</div>
<div class="t" style="left:986.90px;top:624.60px;font-size:20px;color:#7a7a7a;font-weight:400;letter-spacing:0.05px;">00:12</div>
<div class="abs" style="left:1141.3px;top:608.8000000000001px;width:163.5px;height:50.2px;background:#73cb49"></div>
<div class="t" style="left:1183.00px;top:625.67px;font-size:18.4px;color:#e9f8df;font-weight:400;letter-spacing:0.336px;">Approved</div>
<svg class="abs" style="left:1319.7px;top:619.8000000000001px;" width="28.6" height="28.6" viewBox="0 0 28 28" fill="none"><defs><clipPath id="av6"><circle cx="14" cy="14" r="14"/></clipPath>
<linearGradient id="av6g" x1="0" y1="0" x2="1" y2="1"><stop offset="0" stop-color="#4e4e4e"/><stop offset=".5" stop-color="#676767"/><stop offset="1" stop-color="#565656"/></linearGradient></defs>
<g clip-path="url(#av6)"><rect width="28" height="28" fill="url(#av6g)"/>
<path d="M21.5 4 L28 4 L28 24 L24.5 25.5 L22.5 20 Z" fill="#a07b6f"/>
<path d="M20.5 2.5 L24 6 L22 7 Z" fill="#d8dadd"/>
<ellipse cx="15" cy="9.4" rx="7.6" ry="7.2" fill="#1e1b1d"/>
<path d="M7.6 10 C7 14 8.4 17.5 10.4 19 L12 12Z" fill="#1e1b1d"/>
<ellipse cx="16.5" cy="15" rx="5.5" ry="6.4" fill="#dca387"/>
<path d="M10.4 12.5 C12 9 17.5 7.6 22.4 10.4 C22.8 8 19 4.6 15 5 C11.5 5.4 9.6 9 10.4 12.5Z" fill="#1e1b1d"/>
<path d="M10.6 12.4 C11.2 10.8 12.2 10 13.4 9.6 C12.6 11.2 12 13 11.6 15.4Z" fill="#6a3a2a"/>
<path d="M13.2 13.6h2M17.8 13.6h2" stroke="#6b4638" stroke-width=".9"/>
<path d="M15.4 18.2h2.6" stroke="#b9745f" stroke-width=".8"/>
<path d="M7.5 20.5 C9 17.6 11 17.2 12 18.6 C13.5 21 17 22.4 21.6 20.6 L24.5 25.5 L20 28 L8 28 Z" fill="#c2c9d4"/>
<path d="M13 24.4 C16 23.2 20 23.4 23.4 24.6 L22 28 L12.4 28Z" fill="#2a304a"/>
<path d="M2 23.5 L9.5 27 L8 28 L1 26Z" fill="#b5b5b5"/>
<path d="M9 20.2 C10 19 11 19 12 20.4 C11 21.6 10.4 22.6 10.6 24 C9.2 23.2 8.6 21.8 9 20.2Z" fill="#e6e9ee"/>
</g><circle cx="14" cy="14" r="13.6" stroke="#595757" stroke-width=".7" fill="none"/></svg>
<div class="abs" style="left:1355px;top:616.2px;width:166.8px;height:36px;overflow:hidden">
<div class="t" style="left:-0.86px;top:8.74px;font-size:19.5px;color:#666;font-weight:400;letter-spacing:0.627px;">Monica Hemsworth</div>
</div>
<div class="abs" style="left:382px;top:674.6px;width:21.4px;height:21.4px;border:1.5px solid #cfcfcf;border-radius:3.5px;background:#fff"></div>
<div class="t" style="left:428.00px;top:677.30px;font-size:17.5px;color:#444;font-weight:400;letter-spacing:-0.41px;">DC-T626</div>
<svg class="abs" style="left:522.8px;top:675.2px;" width="18" height="19" viewBox="0 0 18 19" fill="none"><g stroke="#8d8d8d" stroke-width="1.35" stroke-linecap="round" stroke-linejoin="round"><path d="M5.6 3.2H3.2A2 2 0 0 0 1.2 5.2V15.6A2 2 0 0 0 3.2 17.6H14.8A2 2 0 0 0 16.8 15.6V5.2A2 2 0 0 0 14.8 3.2H12.4"/><rect x="5.8" y="1.2" width="6.4" height="3.8" rx="1"/><path d="M5.6 10.6L8 13L12.6 8.2"/></g></svg>
<div class="t" style="left:553.44px;top:676.14px;font-size:19.5px;color:#2e2e2e;font-weight:400;letter-spacing:0.494px;">Electrical walk-through</div>
<div class="t" style="left:986.90px;top:675.80px;font-size:20px;color:#222;font-weight:400;letter-spacing:0.05px;">00:17</div>
<div class="abs" style="left:1141.3px;top:660.0000000000001px;width:163.5px;height:50.2px;background:#f02f5b"></div>
<div class="t" style="left:1184.93px;top:676.87px;font-size:18.4px;color:#ffe9ee;font-weight:400;letter-spacing:0.398px;">Rejected</div>
<svg class="abs" style="left:1319.7px;top:671.0000000000001px;" width="28.6" height="28.6" viewBox="0 0 28 28" fill="none"><defs><clipPath id="av7"><circle cx="14" cy="14" r="14"/></clipPath>
<linearGradient id="av7g" x1="0" y1="0" x2="1" y2="1"><stop offset="0" stop-color="#4e4e4e"/><stop offset=".5" stop-color="#676767"/><stop offset="1" stop-color="#565656"/></linearGradient></defs>
<g clip-path="url(#av7)"><rect width="28" height="28" fill="url(#av7g)"/>
<path d="M21.5 4 L28 4 L28 24 L24.5 25.5 L22.5 20 Z" fill="#a07b6f"/>
<path d="M20.5 2.5 L24 6 L22 7 Z" fill="#d8dadd"/>
<ellipse cx="15" cy="9.4" rx="7.6" ry="7.2" fill="#1e1b1d"/>
<path d="M7.6 10 C7 14 8.4 17.5 10.4 19 L12 12Z" fill="#1e1b1d"/>
<ellipse cx="16.5" cy="15" rx="5.5" ry="6.4" fill="#dca387"/>
<path d="M10.4 12.5 C12 9 17.5 7.6 22.4 10.4 C22.8 8 19 4.6 15 5 C11.5 5.4 9.6 9 10.4 12.5Z" fill="#1e1b1d"/>
<path d="M10.6 12.4 C11.2 10.8 12.2 10 13.4 9.6 C12.6 11.2 12 13 11.6 15.4Z" fill="#6a3a2a"/>
<path d="M13.2 13.6h2M17.8 13.6h2" stroke="#6b4638" stroke-width=".9"/>
<path d="M15.4 18.2h2.6" stroke="#b9745f" stroke-width=".8"/>
<path d="M7.5 20.5 C9 17.6 11 17.2 12 18.6 C13.5 21 17 22.4 21.6 20.6 L24.5 25.5 L20 28 L8 28 Z" fill="#c2c9d4"/>
<path d="M13 24.4 C16 23.2 20 23.4 23.4 24.6 L22 28 L12.4 28Z" fill="#2a304a"/>
<path d="M2 23.5 L9.5 27 L8 28 L1 26Z" fill="#b5b5b5"/>
<path d="M9 20.2 C10 19 11 19 12 20.4 C11 21.6 10.4 22.6 10.6 24 C9.2 23.2 8.6 21.8 9 20.2Z" fill="#e6e9ee"/>
</g><circle cx="14" cy="14" r="13.6" stroke="#595757" stroke-width=".7" fill="none"/></svg>
<div class="abs" style="left:1355px;top:667.4000000000001px;width:166.8px;height:36px;overflow:hidden">
<div class="t" style="left:-0.86px;top:8.74px;font-size:19.5px;color:#222;font-weight:400;letter-spacing:0.627px;">Monica Hemsworth</div>
</div>
<div class="t" style="left:1544.24px;top:676.54px;font-size:19.5px;color:#5dbcd8;font-weight:400;letter-spacing:0.579px;">Billable</div>
<svg class="abs" style="left:385.5px;top:731.5px;" width="14" height="10" viewBox="0 0 14 10" fill="none"><path d="M2 2.4L7 7.4L12 2.4" stroke="#333" stroke-width="1.7" stroke-linecap="round" stroke-linejoin="round"/></svg>
<svg class="abs" style="left:522.3px;top:726.7px;" width="19" height="19" viewBox="0 0 19 19" fill="none"><g stroke="#8a8a8a" stroke-width="1.25" stroke-linecap="round"><rect x="1" y="2.2" width="17" height="15.6" rx="2.6"/><path d="M5.2 0.8V3.6M13.8 0.8V3.6M9.5 0.8V3.6"/><path d="M5 8h.8M9.1 8h.8M13.2 8h.8M5 11.2h.8M9.1 11.2h.8M13.2 11.2h.8M5 14.4h.8M9.1 14.4h.8M13.2 14.4h.8" stroke-width="1.5"/></g></svg>
<div class="t" style="left:554.31px;top:727.20px;font-size:19.8px;color:#1c1c1c;font-weight:700;letter-spacing:1.099px;">03/28/2023</div>
<div class="t" style="left:986.88px;top:726.11px;font-size:20.6px;color:#444;font-weight:400;letter-spacing:1.011px;">01:06</div>
<svg class="abs" style="left:1122px;top:711.4px;" width="17" height="18" viewBox="0 0 17 18" fill="none"><path d="M0.5 0H17V18Z" fill="#e6e6e6"/><path d="M10.4 2.6h.3M10.8 5.2L9.8 9.8" stroke="#666" stroke-width="1.6" stroke-linecap="round"/></svg>
<div class="t" style="left:523.20px;top:778.54px;font-size:19.5px;color:#bdbdbd;font-weight:400;letter-spacing:0.196px;">Add Time Log</div>
<div class="abs" style="left:382px;top:828.1999999999999px;width:21.4px;height:21.4px;border:1.5px solid #cfcfcf;border-radius:3.5px;background:#fff"></div>
<div class="t" style="left:428.00px;top:830.90px;font-size:17.5px;color:#444;font-weight:400;letter-spacing:-0.15px;">DC-I44</div>
<svg class="abs" style="left:522.8px;top:828.8px;" width="18" height="19" viewBox="0 0 18 19" fill="none"><g stroke="#8d8d8d" stroke-width="1.25" stroke-linecap="round" stroke-linejoin="round"><path d="M3.6 13.2V7.4C3.6 3.9 5.9 1.4 9 1.4C12.1 1.4 14.4 3.9 14.4 7.4V13.2"/><path d="M1.2 17.4V14.8A1.6 1.6 0 0 1 2.8 13.2H15.2A1.6 1.6 0 0 1 16.8 14.8V17.4Z"/><path d="M9 4.8V9.4M9 11.2V11.4"/></g></svg>
<div class="t" style="left:553.54px;top:829.74px;font-size:19.5px;color:#2e2e2e;font-weight:400;letter-spacing:0.07px;">Urgent!! Final draft design has a flaw, Pleas...</div>
<div class="t" style="left:986.90px;top:829.40px;font-size:20px;color:#222;font-weight:400;letter-spacing:0.725px;">00:28</div>
<div class="abs" style="left:1141.3px;top:813.6px;width:163.5px;height:50.2px;background:#f02f5b"></div>
<div class="t" style="left:1184.93px;top:830.47px;font-size:18.4px;color:#ffe9ee;font-weight:400;letter-spacing:0.398px;">Rejected</div>
<svg class="abs" style="left:1319.7px;top:824.6px;" width="28.6" height="28.6" viewBox="0 0 28 28" fill="none"><defs><clipPath id="av10"><circle cx="14" cy="14" r="14"/></clipPath>
<linearGradient id="av10g" x1="0" y1="0" x2="1" y2="1"><stop offset="0" stop-color="#4e4e4e"/><stop offset=".5" stop-color="#676767"/><stop offset="1" stop-color="#565656"/></linearGradient></defs>
<g clip-path="url(#av10)"><rect width="28" height="28" fill="url(#av10g)"/>
<path d="M21.5 4 L28 4 L28 24 L24.5 25.5 L22.5 20 Z" fill="#a07b6f"/>
<path d="M20.5 2.5 L24 6 L22 7 Z" fill="#d8dadd"/>
<ellipse cx="15" cy="9.4" rx="7.6" ry="7.2" fill="#1e1b1d"/>
<path d="M7.6 10 C7 14 8.4 17.5 10.4 19 L12 12Z" fill="#1e1b1d"/>
<ellipse cx="16.5" cy="15" rx="5.5" ry="6.4" fill="#dca387"/>
<path d="M10.4 12.5 C12 9 17.5 7.6 22.4 10.4 C22.8 8 19 4.6 15 5 C11.5 5.4 9.6 9 10.4 12.5Z" fill="#1e1b1d"/>
<path d="M10.6 12.4 C11.2 10.8 12.2 10 13.4 9.6 C12.6 11.2 12 13 11.6 15.4Z" fill="#6a3a2a"/>
<path d="M13.2 13.6h2M17.8 13.6h2" stroke="#6b4638" stroke-width=".9"/>
<path d="M15.4 18.2h2.6" stroke="#b9745f" stroke-width=".8"/>
<path d="M7.5 20.5 C9 17.6 11 17.2 12 18.6 C13.5 21 17 22.4 21.6 20.6 L24.5 25.5 L20 28 L8 28 Z" fill="#c2c9d4"/>
<path d="M13 24.4 C16 23.2 20 23.4 23.4 24.6 L22 28 L12.4 28Z" fill="#2a304a"/>
<path d="M2 23.5 L9.5 27 L8 28 L1 26Z" fill="#b5b5b5"/>
<path d="M9 20.2 C10 19 11 19 12 20.4 C11 21.6 10.4 22.6 10.6 24 C9.2 23.2 8.6 21.8 9 20.2Z" fill="#e6e9ee"/>
</g><circle cx="14" cy="14" r="13.6" stroke="#595757" stroke-width=".7" fill="none"/></svg>
<div class="abs" style="left:1355px;top:821.0px;width:166.8px;height:36px;overflow:hidden">
<div class="t" style="left:-0.86px;top:8.74px;font-size:19.5px;color:#222;font-weight:400;letter-spacing:0.627px;">Monica Hemsworth</div>
</div>
<div class="abs" style="left:382px;top:879.4px;width:21.4px;height:21.4px;border:1.5px solid #cfcfcf;border-radius:3.5px;background:#fff"></div>
<div class="t" style="left:428.00px;top:882.10px;font-size:17.5px;color:#444;font-weight:400;letter-spacing:-0.462px;">DC-T667</div>
<svg class="abs" style="left:522.8px;top:880.0px;" width="18" height="19" viewBox="0 0 18 19" fill="none"><g stroke="#8d8d8d" stroke-width="1.35" stroke-linecap="round" stroke-linejoin="round"><path d="M5.6 3.2H3.2A2 2 0 0 0 1.2 5.2V15.6A2 2 0 0 0 3.2 17.6H14.8A2 2 0 0 0 16.8 15.6V5.2A2 2 0 0 0 14.8 3.2H12.4"/><rect x="5.8" y="1.2" width="6.4" height="3.8" rx="1"/><path d="M5.6 10.6L8 13L12.6 8.2"/></g></svg>
<div class="t" style="left:553.25px;top:880.94px;font-size:19.5px;color:#2e2e2e;font-weight:400;letter-spacing:0.308px;">Install electric service panel</div>
<div class="t" style="left:986.90px;top:880.60px;font-size:20px;color:#7a7a7a;font-weight:400;letter-spacing:0.725px;">00:23</div>
<div class="abs" style="left:1141.3px;top:864.8000000000001px;width:163.5px;height:50.2px;background:#73cb49"></div>
<div class="t" style="left:1183.00px;top:881.67px;font-size:18.4px;color:#e9f8df;font-weight:400;letter-spacing:0.336px;">Approved</div>
<svg class="abs" style="left:1319.7px;top:875.8000000000001px;" width="28.6" height="28.6" viewBox="0 0 28 28" fill="none"><defs><clipPath id="av11"><circle cx="14" cy="14" r="14"/></clipPath>
<linearGradient id="av11g" x1="0" y1="0" x2="1" y2="1"><stop offset="0" stop-color="#4e4e4e"/><stop offset=".5" stop-color="#676767"/><stop offset="1" stop-color="#565656"/></linearGradient></defs>
<g clip-path="url(#av11)"><rect width="28" height="28" fill="url(#av11g)"/>
<path d="M21.5 4 L28 4 L28 24 L24.5 25.5 L22.5 20 Z" fill="#a07b6f"/>
<path d="M20.5 2.5 L24 6 L22 7 Z" fill="#d8dadd"/>
<ellipse cx="15" cy="9.4" rx="7.6" ry="7.2" fill="#1e1b1d"/>
<path d="M7.6 10 C7 14 8.4 17.5 10.4 19 L12 12Z" fill="#1e1b1d"/>
<ellipse cx="16.5" cy="15" rx="5.5" ry="6.4" fill="#dca387"/>
<path d="M10.4 12.5 C12 9 17.5 7.6 22.4 10.4 C22.8 8 19 4.6 15 5 C11.5 5.4 9.6 9 10.4 12.5Z" fill="#1e1b1d"/>
<path d="M10.6 12.4 C11.2 10.8 12.2 10 13.4 9.6 C12.6 11.2 12 13 11.6 15.4Z" fill="#6a3a2a"/>
<path d="M13.2 13.6h2M17.8 13.6h2" stroke="#6b4638" stroke-width=".9"/>
<path d="M15.4 18.2h2.6" stroke="#b9745f" stroke-width=".8"/>
<path d="M7.5 20.5 C9 17.6 11 17.2 12 18.6 C13.5 21 17 22.4 21.6 20.6 L24.5 25.5 L20 28 L8 28 Z" fill="#c2c9d4"/>
<path d="M13 24.4 C16 23.2 20 23.4 23.4 24.6 L22 28 L12.4 28Z" fill="#2a304a"/>
<path d="M2 23.5 L9.5 27 L8 28 L1 26Z" fill="#b5b5b5"/>
<path d="M9 20.2 C10 19 11 19 12 20.4 C11 21.6 10.4 22.6 10.6 24 C9.2 23.2 8.6 21.8 9 20.2Z" fill="#e6e9ee"/>
</g><circle cx="14" cy="14" r="13.6" stroke="#595757" stroke-width=".7" fill="none"/></svg>
<div class="abs" style="left:1355px;top:872.2px;width:166.8px;height:36px;overflow:hidden">
<div class="t" style="left:-0.86px;top:8.74px;font-size:19.5px;color:#666;font-weight:400;letter-spacing:0.627px;">Monica Hemsworth</div>
</div>
<div class="t" style="left:1544.24px;top:881.34px;font-size:19.5px;color:#5dbcd8;font-weight:400;letter-spacing:0.579px;">Billable</div>
<div class="abs" style="left:382px;top:930.6px;width:21.4px;height:21.4px;border:1.5px solid #cfcfcf;border-radius:3.5px;background:#fff"></div>
<div class="t" style="left:428.00px;top:933.30px;font-size:17.5px;color:#444;font-weight:400;letter-spacing:-0.977px;">DC-T183</div>
<svg class="abs" style="left:522.8px;top:931.2px;" width="18" height="19" viewBox="0 0 18 19" fill="none"><g stroke="#8d8d8d" stroke-width="1.35" stroke-linecap="round" stroke-linejoin="round"><path d="M5.6 3.2H3.2A2 2 0 0 0 1.2 5.2V15.6A2 2 0 0 0 3.2 17.6H14.8A2 2 0 0 0 16.8 15.6V5.2A2 2 0 0 0 14.8 3.2H12.4"/><rect x="5.8" y="1.2" width="6.4" height="3.8" rx="1"/><path d="M5.6 10.6L8 13L12.6 8.2"/></g></svg>
<div class="t" style="left:553.44px;top:932.14px;font-size:19.5px;color:#2e2e2e;font-weight:400;letter-spacing:0.276px;">Prepare client list for walk through</div>
<div class="t" style="left:986.90px;top:931.80px;font-size:20px;color:#7a7a7a;font-weight:400;letter-spacing:0.025px;">00:15</div>
<div class="abs" style="left:1141.3px;top:916.0000000000001px;width:163.5px;height:50.2px;background:#73cb49"></div>
<div class="t" style="left:1183.00px;top:932.87px;font-size:18.4px;color:#e9f8df;font-weight:400;letter-spacing:0.336px;">Approved</div>
<svg class="abs" style="left:1319.7px;top:927.0000000000001px;" width="28.6" height="28.6" viewBox="0 0 28 28" fill="none"><defs><clipPath id="av12"><circle cx="14" cy="14" r="14"/></clipPath>
<linearGradient id="av12g" x1="0" y1="0" x2="1" y2="1"><stop offset="0" stop-color="#4e4e4e"/><stop offset=".5" stop-color="#676767"/><stop offset="1" stop-color="#565656"/></linearGradient></defs>
<g clip-path="url(#av12)"><rect width="28" height="28" fill="url(#av12g)"/>
<path d="M21.5 4 L28 4 L28 24 L24.5 25.5 L22.5 20 Z" fill="#a07b6f"/>
<path d="M20.5 2.5 L24 6 L22 7 Z" fill="#d8dadd"/>
<ellipse cx="15" cy="9.4" rx="7.6" ry="7.2" fill="#1e1b1d"/>
<path d="M7.6 10 C7 14 8.4 17.5 10.4 19 L12 12Z" fill="#1e1b1d"/>
<ellipse cx="16.5" cy="15" rx="5.5" ry="6.4" fill="#dca387"/>
<path d="M10.4 12.5 C12 9 17.5 7.6 22.4 10.4 C22.8 8 19 4.6 15 5 C11.5 5.4 9.6 9 10.4 12.5Z" fill="#1e1b1d"/>
<path d="M10.6 12.4 C11.2 10.8 12.2 10 13.4 9.6 C12.6 11.2 12 13 11.6 15.4Z" fill="#6a3a2a"/>
<path d="M13.2 13.6h2M17.8 13.6h2" stroke="#6b4638" stroke-width=".9"/>
<path d="M15.4 18.2h2.6" stroke="#b9745f" stroke-width=".8"/>
<path d="M7.5 20.5 C9 17.6 11 17.2 12 18.6 C13.5 21 17 22.4 21.6 20.6 L24.5 25.5 L20 28 L8 28 Z" fill="#c2c9d4"/>
<path d="M13 24.4 C16 23.2 20 23.4 23.4 24.6 L22 28 L12.4 28Z" fill="#2a304a"/>
<path d="M2 23.5 L9.5 27 L8 28 L1 26Z" fill="#b5b5b5"/>
<path d="M9 20.2 C10 19 11 19 12 20.4 C11 21.6 10.4 22.6 10.6 24 C9.2 23.2 8.6 21.8 9 20.2Z" fill="#e6e9ee"/>
</g><circle cx="14" cy="14" r="13.6" stroke="#595757" stroke-width=".7" fill="none"/></svg>
<div class="abs" style="left:1355px;top:923.4000000000001px;width:166.8px;height:36px;overflow:hidden">
<div class="t" style="left:-0.86px;top:8.74px;font-size:19.5px;color:#666;font-weight:400;letter-spacing:0.627px;">Monica Hemsworth</div>
</div>
<div class="t" style="left:1544.24px;top:932.54px;font-size:19.5px;color:#5dbcd8;font-weight:400;letter-spacing:0.579px;">Billable</div>
<svg class="abs" style="left:385.5px;top:987.5px;" width="14" height="10" viewBox="0 0 14 10" fill="none"><path d="M2 2.4L7 7.4L12 2.4" stroke="#333" stroke-width="1.7" stroke-linecap="round" stroke-linejoin="round"/></svg>
<svg class="abs" style="left:522.3px;top:982.7px;" width="19" height="19" viewBox="0 0 19 19" fill="none"><g stroke="#8a8a8a" stroke-width="1.25" stroke-linecap="round"><rect x="1" y="2.2" width="17" height="15.6" rx="2.6"/><path d="M5.2 0.8V3.6M13.8 0.8V3.6M9.5 0.8V3.6"/><path d="M5 8h.8M9.1 8h.8M13.2 8h.8M5 11.2h.8M9.1 11.2h.8M13.2 11.2h.8M5 14.4h.8M9.1 14.4h.8M13.2 14.4h.8" stroke-width="1.5"/></g></svg>
<div class="t" style="left:554.31px;top:983.20px;font-size:19.8px;color:#1c1c1c;font-weight:700;letter-spacing:0.921px;">03/27/2023</div>
<div class="t" style="left:986.88px;top:982.11px;font-size:20.6px;color:#444;font-weight:400;letter-spacing:0.223px;">00:11</div>
<svg class="abs" style="left:1122px;top:967.4px;" width="17" height="18" viewBox="0 0 17 18" fill="none"><path d="M0.5 0H17V18Z" fill="#e6e6e6"/><path d="M10.4 2.6h.3M10.8 5.2L9.8 9.8" stroke="#666" stroke-width="1.6" stroke-linecap="round"/></svg>
<div class="t" style="left:523.20px;top:1034.54px;font-size:19.5px;color:#bdbdbd;font-weight:400;letter-spacing:0.196px;">Add Time Log</div>
<div class="abs" style="left:382px;top:1084.1999999999998px;width:21.4px;height:21.4px;border:1.5px solid #cfcfcf;border-radius:3.5px;background:#fff"></div>
<div class="t" style="left:428.00px;top:1086.90px;font-size:17.5px;color:#444;font-weight:400;letter-spacing:-0.644px;">DC-I3</div>
<svg class="abs" style="left:522.8px;top:1084.8px;" width="18" height="19" viewBox="0 0 18 19" fill="none"><g stroke="#8d8d8d" stroke-width="1.25" stroke-linecap="round" stroke-linejoin="round"><path d="M3.6 13.2V7.4C3.6 3.9 5.9 1.4 9 1.4C12.1 1.4 14.4 3.9 14.4 7.4V13.2"/><path d="M1.2 17.4V14.8A1.6 1.6 0 0 1 2.8 13.2H15.2A1.6 1.6 0 0 1 16.8 14.8V17.4Z"/><path d="M9 4.8V9.4M9 11.2V11.4"/></g></svg>
<div class="t" style="left:555.00px;top:1085.74px;font-size:19.5px;color:#2e2e2e;font-weight:400;letter-spacing:1.116px;">Adult notice in construction</div>
<div class="t" style="left:986.90px;top:1085.40px;font-size:20px;color:#7a7a7a;font-weight:400;letter-spacing:0.425px;">00:11</div>
<div class="abs" style="left:1141.3px;top:1069.6px;width:163.5px;height:50.2px;background:#73cb49"></div>
<div class="t" style="left:1183.00px;top:1086.47px;font-size:18.4px;color:#e9f8df;font-weight:400;letter-spacing:0.336px;">Approved</div>
<svg class="abs" style="left:1319.7px;top:1080.6px;" width="28.6" height="28.6" viewBox="0 0 28 28" fill="none"><defs><clipPath id="av15"><circle cx="14" cy="14" r="14"/></clipPath>
<linearGradient id="av15g" x1="0" y1="0" x2="1" y2="1"><stop offset="0" stop-color="#4e4e4e"/><stop offset=".5" stop-color="#676767"/><stop offset="1" stop-color="#565656"/></linearGradient></defs>
<g clip-path="url(#av15)"><rect width="28" height="28" fill="url(#av15g)"/>
<path d="M21.5 4 L28 4 L28 24 L24.5 25.5 L22.5 20 Z" fill="#a07b6f"/>
<path d="M20.5 2.5 L24 6 L22 7 Z" fill="#d8dadd"/>
<ellipse cx="15" cy="9.4" rx="7.6" ry="7.2" fill="#1e1b1d"/>
<path d="M7.6 10 C7 14 8.4 17.5 10.4 19 L12 12Z" fill="#1e1b1d"/>
<ellipse cx="16.5" cy="15" rx="5.5" ry="6.4" fill="#dca387"/>
<path d="M10.4 12.5 C12 9 17.5 7.6 22.4 10.4 C22.8 8 19 4.6 15 5 C11.5 5.4 9.6 9 10.4 12.5Z" fill="#1e1b1d"/>
<path d="M10.6 12.4 C11.2 10.8 12.2 10 13.4 9.6 C12.6 11.2 12 13 11.6 15.4Z" fill="#6a3a2a"/>
<path d="M13.2 13.6h2M17.8 13.6h2" stroke="#6b4638" stroke-width=".9"/>
<path d="M15.4 18.2h2.6" stroke="#b9745f" stroke-width=".8"/>
<path d="M7.5 20.5 C9 17.6 11 17.2 12 18.6 C13.5 21 17 22.4 21.6 20.6 L24.5 25.5 L20 28 L8 28 Z" fill="#c2c9d4"/>
<path d="M13 24.4 C16 23.2 20 23.4 23.4 24.6 L22 28 L12.4 28Z" fill="#2a304a"/>
<path d="M2 23.5 L9.5 27 L8 28 L1 26Z" fill="#b5b5b5"/>
<path d="M9 20.2 C10 19 11 19 12 20.4 C11 21.6 10.4 22.6 10.6 24 C9.2 23.2 8.6 21.8 9 20.2Z" fill="#e6e9ee"/>
</g><circle cx="14" cy="14" r="13.6" stroke="#595757" stroke-width=".7" fill="none"/></svg>
<div class="abs" style="left:1355px;top:1077.0px;width:166.8px;height:36px;overflow:hidden">
<div class="t" style="left:-0.86px;top:8.74px;font-size:19.5px;color:#666;font-weight:400;letter-spacing:0.627px;">Monica Hemsworth</div>
</div>
<div class="abs" style="left:811px;top:464.8px;width:155px;height:32.4px;background:#f7f9fd;border-radius:4px;box-shadow:0 1px 3px rgba(60,80,120,.18)"></div>
<svg class="abs" style="left:823px;top:471px;" width="19" height="18" viewBox="0 0 19 18" fill="none"><g stroke="#4a7fd0" stroke-width="1.3" stroke-linecap="round" stroke-linejoin="round"><path d="M3.2 2.6H6.4M3.2 2.6A1.6 1.6 0 0 0 1.6 4.2V7.2M15.8 10.6V14A1.6 1.6 0 0 1 14.2 15.6H11M8.6 15.6H7.4" /><path d="M9 2.6H10"/><path d="M11.4 7L17.4 1M13.6 0.9H17.5V4.8"/><path d="M6.4 11.2L1.4 16.4M1.3 12.8V16.5H5"/></g></svg>
<div class="t" style="left:849.70px;top:472.36px;font-size:17.8px;color:#4a86d6;font-weight:400;letter-spacing:0.076px;">Open Details</div>
<div class="abs" style="left:335.0px;top:478.4px;width:3.4px;height:3.4px;background:#3b72d6;border-radius:50%"></div>
<div class="abs" style="left:340.6px;top:478.4px;width:3.4px;height:3.4px;background:#3b72d6;border-radius:50%"></div>
<div class="abs" style="left:346.2px;top:478.4px;width:3.4px;height:3.4px;background:#3b72d6;border-radius:50%"></div>
<svg class="abs" style="left:1258px;top:469px;" width="18" height="27" viewBox="0 0 18 27" fill="none"><path d="M2.5 2.2V21.2L7 17L10.2 24.6L13.4 23.2L10.2 15.8H16Z" fill="#111" stroke="#fff" stroke-width="1.4" stroke-linejoin="round"/></svg>
<div class="abs" style="left:322px;top:1083px;width:1544px;height:9px;background:linear-gradient(180deg,rgba(0,0,0,0),rgba(0,0,0,.055))"></div>
<div class="abs" style="left:322px;top:1091.4px;width:1544px;height:45.6px;background:#fdfdfd"></div>
<div class="t" style="left:366.59px;top:1106.75px;font-size:17.6px;color:#666;font-weight:400;letter-spacing:0.293px;">Billable</div>
<div class="t" style="left:438.90px;top:1105.60px;font-size:20px;color:#50c2da;font-weight:400;letter-spacing:0.9px;">00:55 h</div>
<div class="t" style="left:537.69px;top:1106.75px;font-size:17.6px;color:#666;font-weight:400;letter-spacing:0.174px;">Non Billable</div>
<div class="t" style="left:646.10px;top:1105.60px;font-size:20px;color:#eda560;font-weight:400;letter-spacing:0.2px;">01:26 h</div>
<div class="t" style="left:742.25px;top:1106.75px;font-size:17.6px;color:#666;font-weight:400;letter-spacing:0.318px;">Total</div>
<div class="t" style="left:793.80px;top:1105.60px;font-size:20px;color:#3b7cdb;font-weight:400;letter-spacing:-0.167px;">02:21 h</div>
<div class="abs" style="left:875px;top:1104.5px;width:1px;height:21px;background:#dcdcdc"></div>
<div class="t" style="left:887.65px;top:1106.75px;font-size:17.6px;color:#666;font-weight:400;letter-spacing:0.013px;">Total Cost</div>
<div class="t" style="left:979.80px;top:1105.60px;font-size:20px;color:#3fae4d;font-weight:400;letter-spacing:0.54px;">$ 9.50</div>
<div class="t" style="left:1455.20px;top:1105.20px;font-size:20px;color:#222;font-weight:400;letter-spacing:0.115px;">Total Count: 8</div>
<div class="abs" style="left:1592.5px;top:1104.5px;width:1px;height:21px;background:#d5d5d5"></div>
<svg class="abs" style="left:1606px;top:1107px;" width="15" height="15" viewBox="0 0 15 15" fill="none"><path d="M7 1.5L1.6 7.5L7 13.5M13 1.5L7.6 7.5L13 13.5" stroke="#9a9a9a" stroke-width="1.3" stroke-linecap="round" stroke-linejoin="round"/></svg>
<svg class="abs" style="left:1643px;top:1104px;" width="22" height="22" viewBox="0 0 22 22" fill="none"><circle cx="11" cy="11" r="9.6" stroke="#9a9a9a" stroke-width="1.2"/><path d="M12.6 6.8L8.6 11L12.6 15.2" stroke="#9a9a9a" stroke-width="1.3" stroke-linecap="round" stroke-linejoin="round"/></svg>
<div class="t" style="left:1698.10px;top:1105.20px;font-size:20px;color:#111;font-weight:400;letter-spacing:-0.3px;">1-8</div>
<svg class="abs" style="left:1761.2px;top:1104px;" width="22" height="22" viewBox="0 0 22 22" fill="none"><circle cx="11" cy="11" r="9.6" stroke="#9a9a9a" stroke-width="1.2"/><path d="M9.4 6.8L13.4 11L9.4 15.2" stroke="#9a9a9a" stroke-width="1.3" stroke-linecap="round" stroke-linejoin="round"/></svg>
<svg class="abs" style="left:1805px;top:1107px;" width="15" height="15" viewBox="0 0 15 15" fill="none"><path d="M2 1.5L7.4 7.5L2 13.5M8 1.5L13.4 7.5L8 13.5" stroke="#9a9a9a" stroke-width="1.3" stroke-linecap="round" stroke-linejoin="round"/></svg>
<div class="abs" style="left:16px;top:1136px;width:1850px;height:1px;background:#c9c9d2"></div>
</div></div>
</body></html>
